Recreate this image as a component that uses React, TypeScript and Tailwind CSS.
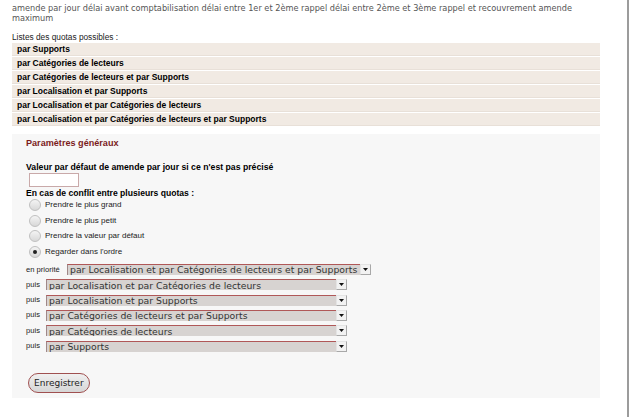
import { useState } from 'react'

const QUOTAS = [
  'par Supports',
  'par Catégories de lecteurs',
  'par Catégories de lecteurs et par Supports',
  'par Localisation et par Supports',
  'par Localisation et par Catégories de lecteurs',
  'par Localisation et par Catégories de lecteurs et par Supports',
]

const RADIOS = [
  'Prendre le plus grand',
  'Prendre le plus petit',
  'Prendre la valeur par défaut',
  'Regarder dans l\'ordre',
]

const ORDER = [
  { label: 'en priorité', value: 'par Localisation et par Catégories de lecteurs et par Supports', first: true },
  { label: 'puis', value: 'par Localisation et par Catégories de lecteurs' },
  { label: 'puis', value: 'par Localisation et par Supports' },
  { label: 'puis', value: 'par Catégories de lecteurs et par Supports' },
  { label: 'puis', value: 'par Catégories de lecteurs' },
  { label: 'puis', value: 'par Supports' },
]

function FakeSelect({ value, first }: { value: string; first?: boolean }) {
  return (
    <div className={`flex h-[11px] ${first ? 'w-[304px]' : 'w-[301px]'}`}>
      <div className="flex-1 flex items-center bg-[#d7d3d1] border-t border-t-[#b05858] border-l border-l-[#a08888] pl-[2px] text-[9.3px] leading-none text-[#333] font-['DejaVu_Sans',sans-serif] overflow-hidden whitespace-nowrap">
        {value}
      </div>
      <div className="w-[11px] flex items-center justify-center bg-[#f2f2f2] border border-[#a8a8a8] border-t-[#e4e4e4] border-l-[#e4e4e4]">
        <svg width="5" height="3" viewBox="0 0 5 3"><path d="M0 0h5L2.5 3z" fill="#111" /></svg>
      </div>
    </div>
  )
}

export default function App() {
  const [choice, setChoice] = useState(3)

  return (
    <div className="relative w-[630px] h-[417px] bg-white font-['Liberation_Sans',Arial,sans-serif] text-[8px] leading-[10px] text-black overflow-hidden">
      <div className="absolute right-[1px] top-0 bottom-0 w-[2px] bg-[#9c9c9c]" />
      <div className="pl-[12px] pr-[30px] pt-[3px]">
        <p className="text-[#555] w-[575px] font-['DejaVu_Sans',sans-serif] text-[8.2px]">
          amende par jour délai avant comptabilisation délai entre 1er et 2ème rappel délai entre 2ème et 3ème rappel et recouvrement amende maximum
        </p>
        <p className="mt-[9px] text-[8.3px] text-[#222]">Listes des quotas possibles :</p>
        <div className="w-[588px] flex flex-col gap-[1px] mt-[1px]">
          {QUOTAS.map((q) => (
            <div key={q} className="h-[13px] bg-[#f1eae3] border-b border-[#e8e0d8] pl-[5px] font-bold text-[8.5px] flex items-center">
              {q}
            </div>
          ))}
        </div>

        <div className="w-[588px] mt-[8px] bg-[#f7f7f7] pl-[14px] pt-[4px] h-[264px]">
          <h2 className="text-[9.1px] font-bold text-[#7b1c1c]">Paramètres généraux</h2>
          <p className="mt-[14px] font-bold text-[8.7px]">Valeur par défaut de amende par jour si ce n'est pas précisé</p>
          <input className="ml-[3px] mt-[1px] block w-[50px] h-[14px] bg-white border border-[#c9a9a9] outline-none" />
          <p className="mt-[1px] font-bold text-[8.6px]">En cas de conflit entre plusieurs quotas :</p>
          <div className="flex flex-col gap-[3.6px] mt-[1px]">
            {RADIOS.map((r, i) => (
              <label key={r} className="h-[12px] flex items-center gap-[4px] pl-[3px] cursor-pointer" onClick={() => setChoice(i)}>
                <span className="w-[12px] h-[12px] rounded-full border border-[#c0c0c0] bg-gradient-to-b from-[#f4f4f4] to-[#d8d8d8] flex items-center justify-center">
                  {choice === i && <span className="w-[4px] h-[4px] rounded-full bg-[#222]" />}
                </span>
                <span className="text-[#222]">{r}</span>
              </label>
            ))}
          </div>
          <div className="flex flex-col gap-[4.3px] mt-[6.3px]">
            {ORDER.map((o, i) => (
              <div key={i} className="flex items-center">
                <span className={`text-[#222] text-[7.6px] ${o.first ? 'w-[41px]' : 'w-[20px]'}`}>{o.label}</span>
                <FakeSelect value={o.value} first={o.first} />
              </div>
            ))}
          </div>
          <button className="mt-[21.5px] ml-[2px] h-[20px] px-[5px] rounded-full border border-[#a05050] bg-gradient-to-b from-[#f0f0f0] to-[#d6d6d6] text-[9px] text-[#222] font-['DejaVu_Sans',sans-serif]">
            Enregistrer
          </button>
        </div>
      </div>
    </div>
  )
}
